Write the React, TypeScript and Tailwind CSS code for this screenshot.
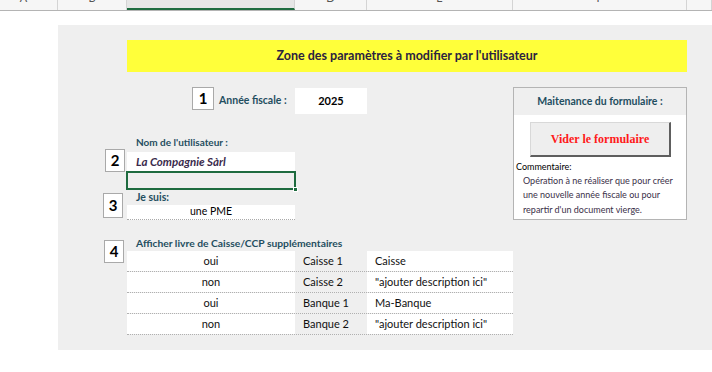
import React from "react";

const cols = [
  { l: "A", w: 58, pr: 10 },
  { l: "B", w: 69 },
  { l: "C", w: 168, sel: true },
  { l: "D", w: 72 },
  { l: "E", w: 146 },
  { l: "F", w: 174 },
  { l: "", w: 25 },
];

const rows = [
  ["oui", "Caisse 1", "Caisse"],
  ["non", "Caisse 2", "\"ajouter description ici\""],
  ["oui", "Banque 1", "Ma-Banque"],
  ["non", "Banque 2", "\"ajouter description ici\""],
];

const NumBox: React.FC<{ n: string; cls: string }> = ({ n, cls }) => (
  <div
    className={`flex items-center justify-center bg-white border border-[#a9a9a9] text-[15px] font-bold text-black ${cls}`}
  >
    {n}
  </div>
);

const App: React.FC = () => {
  return (
    <div className="w-[712px] h-[372px] bg-white overflow-hidden font-['Lato',sans-serif]">
      {/* column headers, cut off at top */}
      <div className="flex h-[11px] overflow-hidden border-b border-[#b4b4b4]">
        {cols.map((c, i) => (
          <div
            key={i}
            style={{ width: c.w, paddingRight: c.pr ?? 0 }}
            className={`shrink-0 flex items-end justify-center border-r border-[#d4d4d4] ${
              c.sel ? "bg-[#e6e6e6] border-b-2 border-b-[#1e6b3f] text-[#1e6b3f]" : "bg-[#f6f6f6] text-[#555]"
            }`}
          >
            <span className="text-[11px] leading-[12px] mb-[6px]">{c.l}</span>
          </div>
        ))}
      </div>

      {/* parameter zone */}
      <div className="mt-[14px] ml-[58px] h-[325px] bg-[#efefef] pt-[15px]">
        <div className="ml-[69px] w-[560px] h-[32px] bg-[#ffff3a] flex items-center justify-center text-[12.5px] font-bold text-[#2b2340]">
          Zone des paramètres à modifier par l'utilisateur
        </div>

        <div className="flex mt-[15px]">
          {/* left part */}
          <div className="w-[455px]">
            {/* 1 */}
            <div className="flex items-start h-[27px]">
              <NumBox n="1" cls="ml-[134px] w-[22px] h-[23px]" />
              <div className="ml-[5px] w-[76px] h-[27px] flex items-center text-[10.5px] font-bold text-[#1f4e5f]">
                Année fiscale :
              </div>
              <div className="mt-px w-[72px] h-[26px] bg-white flex items-center justify-center text-[11px] font-bold text-black">
                2025
              </div>
            </div>

            {/* 2 */}
            <div className="flex mt-[21px]">
              <div className="w-[69px]">
                <NumBox n="2" cls="ml-[47px] mt-[14px] w-[20px] h-[23px]" />
              </div>
              <div className="w-[168px]">
                <div className="h-[15px] leading-[15px] pl-[9px] text-[10px] font-bold text-[#1f4e5f]">
                  Nom de l'utilisateur :
                </div>
                <div className="mt-[2px] h-[19px] bg-white flex items-center pl-[9px] text-[11.5px] font-bold italic text-[#3a2a4c]">
                  La Compagnie Sàrl
                </div>
                <div className="relative -ml-px w-[170px] h-[19px] border-2 border-[#1e6b3f]">
                  <div className="absolute -right-[4px] -bottom-[4px] w-[5px] h-[5px] bg-[#1e6b3f] border border-white" />
                </div>
              </div>
            </div>

            {/* 3 */}
            <div className="flex">
              <div className="w-[69px]">
                <NumBox n="3" cls="ml-[45px] mt-[3px] w-[20px] h-[25px]" />
              </div>
              <div className="w-[168px]">
                <div className="h-[15px] leading-[15px] pl-[9px] text-[10.5px] font-bold text-[#1f4e5f]">Je suis:</div>
                <div className="h-[15px] bg-white border-b border-dotted border-[#aaa] flex items-center justify-center text-[10.5px] text-black">
                  une PME
                </div>
              </div>
            </div>

            {/* 4 */}
            <div className="flex mt-[16px]">
              <div className="w-[69px]">
                <NumBox n="4" cls="ml-[46px] mt-[4px] w-[20px] h-[23px]" />
              </div>
              <div className="w-[386px]">
                <div className="h-[15px] leading-[15px] pl-[9px] text-[10.3px] font-bold text-[#1f4e5f]">
                  Afficher livre de Caisse/CCP supplémentaires
                </div>
                {rows.map((r, i) => (
                  <div key={i} className="flex h-[21px] border-b border-dotted border-[#b0b0b0] text-[11px] text-[#111]">
                    <div className="w-[168px] bg-white flex items-center justify-center">{r[0]}</div>
                    <div className="w-[72px] flex items-center pl-[8px]">{r[1]}</div>
                    <div className="w-[146px] bg-white flex items-center pl-[8px]">{r[2]}</div>
                  </div>
                ))}
              </div>
            </div>
          </div>

          {/* right box */}
          <div className="w-[174px] h-[133px] border border-[#b4b4b4] bg-white">
            <div className="h-[27px] bg-[#efefef] flex items-center justify-center text-[10.5px] font-bold text-[#1f4e5f]">
              Maitenance du formulaire :
            </div>
            <div className="ml-[16px] mt-[7px] w-[141px] h-[35px] bg-[#eeeeee] border-t border-l border-[#d8d8d8] border-r-2 border-b-2 border-r-[#5e5e5e] border-b-[#5e5e5e] flex items-center justify-center font-['Liberation_Serif',serif] text-[12px] font-bold text-[#ff1a1a]">
              Vider le formulaire
            </div>
            <div className="mt-[3px] pl-[2px] text-[9px] leading-[14px] text-black">Commentaire:</div>
            <div className="pl-[9px] text-[9px] leading-[14.3px] text-[#3a2f48]">
              Opération à ne réaliser que pour créer
              <br />
              une nouvelle année fiscale ou pour
              <br />
              repartir d'un document vierge.
            </div>
          </div>
        </div>
      </div>
    </div>
  );
};

export default App;
